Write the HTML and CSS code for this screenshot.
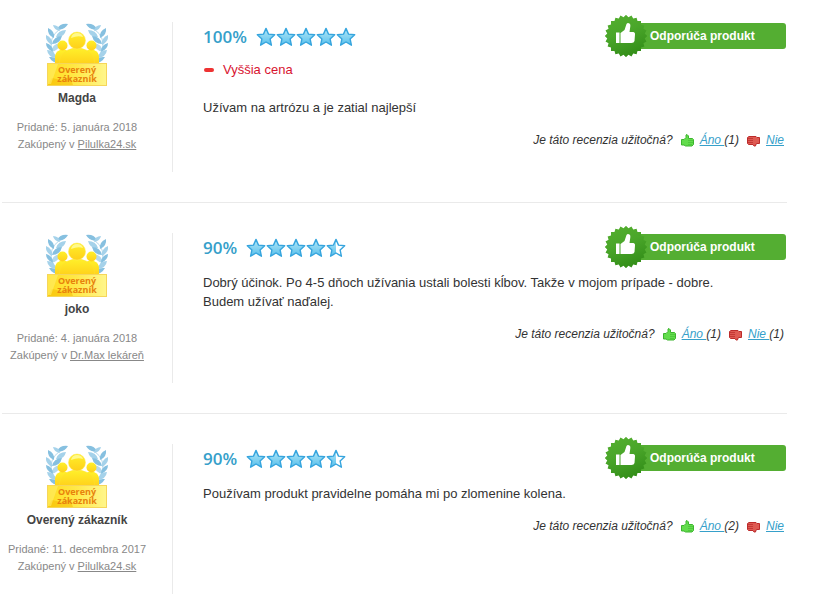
FILE: index.html
```html
<!DOCTYPE html>
<html lang="sk">
  <head>
    <meta charset="UTF-8" />
    <meta name="viewport" content="width=device-width, initial-scale=1.0" />
    <title>Recenzie produktu</title>
    <link rel="stylesheet" href="styles.css">
  </head>
  <body>
    <!-- Shared icons -->
    <svg class="sprite" aria-hidden="true">
      <defs>
        <linearGradient id="star-fill" x1="0" y1="0" x2="0" y2="1">
          <stop offset="0" stop-color="#b4e8f8" />
          <stop offset="1" stop-color="#58bfeb" />
        </linearGradient>
        <linearGradient id="gold" x1="0" y1="0" x2="0" y2="1">
          <stop offset="0" stop-color="#fff02a" />
          <stop offset="1" stop-color="#ffcf1a" />
        </linearGradient>
        <linearGradient id="plate" x1="0" y1="0" x2="1" y2="0">
          <stop offset="0" stop-color="#ffdc1e" />
          <stop offset="0.5" stop-color="#ffe94a" />
          <stop offset="1" stop-color="#fff68c" />
        </linearGradient>
        <linearGradient id="seal-fill" x1="0" y1="0" x2="0.4" y2="1">
          <stop offset="0" stop-color="#55b030" />
          <stop offset="0.5" stop-color="#4aa62a" />
          <stop offset="1" stop-color="#35901a" />
        </linearGradient>
        <clipPath id="seal-shape">
          <rect x="6" y="6" width="30" height="30" />
          <rect x="6" y="6" width="30" height="30" transform="rotate(15 21 21)" />
          <rect x="6" y="6" width="30" height="30" transform="rotate(30 21 21)" />
          <rect x="6" y="6" width="30" height="30" transform="rotate(45 21 21)" />
          <rect x="6" y="6" width="30" height="30" transform="rotate(60 21 21)" />
          <rect x="6" y="6" width="30" height="30" transform="rotate(75 21 21)" />
        </clipPath>
      </defs>

      <symbol id="star" viewBox="0 0 20 20">
        <path d="M10 1.4l2.5 5.7 6.2.6-4.6 4.2 1.3 6.3L10 15l-5.4 3.2 1.3-6.3L1.3 7.7l6.2-.6z" fill="url(#star-fill)" stroke="#36a5de" stroke-width="1.4" stroke-linejoin="round" />
      </symbol>

      <symbol id="star-half" viewBox="0 0 20 20">
        <path d="M10 2v13l-5 2.8 1.2-6L2 8l5.7-.5z" fill="url(#star-fill)" />
        <path d="M10 1.4l2.5 5.7 6.2.6-4.6 4.2 1.3 6.3L10 15l-5.4 3.2 1.3-6.3L1.3 7.7l6.2-.6z" fill="none" stroke="#36a5de" stroke-width="1.4" stroke-linejoin="round" />
      </symbol>

      <symbol id="wreath" viewBox="0 0 24 42">
        <path d="M20 3Q5 9 5 22q1 10 9 17" fill="none" stroke="#b5d9ec" />
        <g fill="#86c0e0">
          <path d="M22 1q-8-1-11 5 7 2 11-5z" />
          <path d="M14 8q-6-1-7-6 6 0 7 6z" fill="#a5d2ea" />
          <path d="M20 7q-8 0-10 7 8 1 10-7z" fill="#a5d2ea" />
          <path d="M8 15Q1 12 2 5q7 3 6 10z" />
          <path d="M16 13q-8 0-10 8 8 0 10-8z" />
          <path d="M6 22Q-1 18 0 12q7 3 6 10z" fill="#a5d2ea" />
          <path d="M14 20q-8 1-9 9 8-1 9-9z" fill="#b5d9ec" />
          <path d="M7 29q-7-3-7-9 7 2 7 9z" />
          <path d="M10 35q-8-1-9-8 8 0 9 8z" fill="#a5d2ea" />
          <path d="M14 40Q7 41 3 34q8-1 11 6z" />
        </g>
      </symbol>

      <symbol id="verified" viewBox="0 0 62 64">
        <use href="#wreath" width="24" height="42" />
        <use href="#wreath" width="24" height="42" transform="translate(62 0) scale(-1 1)" />
        <g fill="url(#gold)">
          <path d="M9 42v-8q0-5 5-7h6q4 2 4 6v9z" />
          <path d="M38 42v-9q0-4 4-6h6q5 2 5 7v8z" />
          <circle cx="16.5" cy="22.5" r="5" />
          <circle cx="45.5" cy="22.5" r="5" />
        </g>
        <path d="M13 42q0-14 15-17h6q15 3 15 17z" fill="url(#gold)" stroke="#ffdf30" stroke-width="0.5" />
        <circle cx="31" cy="17.5" r="8.5" fill="url(#gold)" stroke="#ffe75a" stroke-width="0.5" />
        <path d="M25 15q1-5 6-5 5 0 6 4-5-2-12 1z" fill="#fff98c" />
        <rect x="1.5" y="40.5" width="59" height="22" fill="url(#plate)" stroke="#f6d65a" />
        <path d="M2 62l4-7 9 2 9-3 3 8z" fill="#f5b800" opacity="0.5" />
        <path d="M2 41h10L5 61H2z" fill="#fff17a" opacity="0.5" />
      </symbol>

      <symbol id="seal" viewBox="0 0 42 42">
        <rect width="42" height="42" fill="url(#seal-fill)" clip-path="url(#seal-shape)" />
        <path d="M11 17.5h3.5V28H11zM15.500 18l4-3 2-6q1-1.500 3-.5 1.300 1 .8 3L24.500 17h4q2 .5 1.500 2.500l-.5 6.500q-.5 2-3 2h-11z" fill="#fff" />
      </symbol>

      <symbol id="thumb-up" viewBox="0 0 13 13">
        <path d="M.5 5.500H3l2-2V1l1-.5L7.500 2v2.500h4l1 1v5L11 12H4.500L3 11H.5z" fill="#62dc4c" stroke="#3db52f" />
        <path d="M7 6.500h5M7 8.500h5M7 10.500h4" stroke="#3db52f" opacity="0.500" />
      </symbol>

      <symbol id="thumb-down" viewBox="0 0 13 13">
        <path d="M12.500 3.500H10l-1-1H2l-1.500 1v6l1 1H6l1 1.500h1.500l.5-2 1-.5h2.500z" fill="#de5a52" stroke="#bc2b2b" />
        <path d="M1 4.500h5M1 6.500h5M1 8.500h5" stroke="#b52222" opacity="0.600" />
      </symbol>
    </svg>

    <main class="reviews">
      <article class="review">
        <div class="author">
          <div class="verified">
            <svg aria-hidden="true"><use href="#verified" /></svg>
            <span>Overený<br>zákazník</span>
          </div>
          <strong class="name">Magda</strong>
          <p class="meta">Pridané: 5. januára 2018<br>Zakúpený v <a href="#">Pilulka24.sk</a></p>
        </div>
        <div class="content">
          <div class="top">
            <span class="percent">100%</span>
            <span class="stars">
              <svg><use href="#star" /></svg>
              <svg><use href="#star" /></svg>
              <svg><use href="#star" /></svg>
              <svg><use href="#star" /></svg>
              <svg><use href="#star" /></svg>
            </span>
            <div class="recommend"><svg class="seal"><use href="#seal" /></svg>Odporúča produkt</div>
          </div>
          <ul class="cons">
            <li>Vyššia cena</li>
          </ul>
          <p class="text">Užívam na artrózu a je zatial najlepší</p>
          <div class="useful">
            <span class="question">Je táto recenzia užitočná?</span>
            <svg><use href="#thumb-up" /></svg>
            <span class="vote"><a href="#">Áno </a>(1)</span>
            <svg><use href="#thumb-down" /></svg>
            <span class="vote"><a href="#">Nie</a></span>
          </div>
        </div>
      </article>

      <article class="review">
        <div class="author">
          <div class="verified">
            <svg aria-hidden="true"><use href="#verified" /></svg>
            <span>Overený<br>zákazník</span>
          </div>
          <strong class="name">joko</strong>
          <p class="meta">Pridané: 4. januára 2018<br>Zakúpený v <a href="#">Dr.Max lekáreň</a></p>
        </div>
        <div class="content">
          <div class="top">
            <span class="percent">90%</span>
            <span class="stars">
              <svg><use href="#star" /></svg>
              <svg><use href="#star" /></svg>
              <svg><use href="#star" /></svg>
              <svg><use href="#star" /></svg>
              <svg><use href="#star-half" /></svg>
            </span>
            <div class="recommend"><svg class="seal"><use href="#seal" /></svg>Odporúča produkt</div>
          </div>
          <p class="text">Dobrý účinok. Po 4-5 dňoch užívania ustali bolesti kĺbov. Takže v mojom prípade - dobre.<br>Budem užívať naďalej.</p>
          <div class="useful">
            <span class="question">Je táto recenzia užitočná?</span>
            <svg><use href="#thumb-up" /></svg>
            <span class="vote"><a href="#">Áno </a>(1)</span>
            <svg><use href="#thumb-down" /></svg>
            <span class="vote"><a href="#">Nie </a>(1)</span>
          </div>
        </div>
      </article>

      <article class="review">
        <div class="author">
          <div class="verified">
            <svg aria-hidden="true"><use href="#verified" /></svg>
            <span>Overený<br>zákazník</span>
          </div>
          <strong class="name">Overený zákazník</strong>
          <p class="meta">Pridané: 11. decembra 2017<br>Zakúpený v <a href="#">Pilulka24.sk</a></p>
        </div>
        <div class="content">
          <div class="top">
            <span class="percent">90%</span>
            <span class="stars">
              <svg><use href="#star" /></svg>
              <svg><use href="#star" /></svg>
              <svg><use href="#star" /></svg>
              <svg><use href="#star" /></svg>
              <svg><use href="#star-half" /></svg>
            </span>
            <div class="recommend"><svg class="seal"><use href="#seal" /></svg>Odporúča produkt</div>
          </div>
          <p class="text">Používam produkt pravidelne pomáha mi po zlomenine kolena.</p>
          <div class="useful">
            <span class="question">Je táto recenzia užitočná?</span>
            <svg><use href="#thumb-up" /></svg>
            <span class="vote"><a href="#">Áno </a>(2)</span>
            <svg><use href="#thumb-down" /></svg>
            <span class="vote"><a href="#">Nie</a></span>
          </div>
        </div>
      </article>
    </main>
  </body>
</html>
```
FILE: styles.css
```css
body {
  margin: 0;
  background: #fff;
  color: #333;
  font-family: "Liberation Sans", Arial, sans-serif;
  font-size: 13px;
  line-height: 19px;
}

p,
ul {
  margin: 0;
  padding: 0;
}

.sprite {
  position: absolute;
  width: 0;
  height: 0;
}

.reviews {
  margin: 0 27px 0 2px;
}

.review {
  display: flex;
  padding: 30px 0;
  border-bottom: 1px solid #eaeaea;
}

.review:first-child {
  padding-top: 22px;
}

.review:last-child {
  padding-bottom: 0;
  border-bottom: none;
}

/* Left column */
.author {
  flex: 0 0 150px;
  min-height: 150px;
  padding-right: 20px;
  border-right: 1px solid #eaeaea;
  text-align: center;
}

.verified {
  position: relative;
  width: 62px;
  margin: 1px auto 0;
}

.verified svg {
  display: block;
  width: 62px;
  height: 64px;
}

/* label on the golden plate */
.verified span {
  position: absolute;
  right: 0;
  bottom: 4px;
  left: 0;
  color: #e8820c;
  font-family: "Open Sans", sans-serif;
  font-size: 9px;
  font-weight: 700;
  line-height: 9px;
}

.name {
  display: block;
  margin-top: 2px;
  font-size: 12px;
  color: #444;
}

.meta {
  margin-top: 11px;
  font-size: 11px;
  line-height: 17px;
  color: #888;
}

.meta a {
  color: #888;
}

/* Right column */
.content {
  flex: 1;
  padding-left: 30px;
}

.top {
  display: flex;
  align-items: center;
  height: 28px;
  margin-bottom: 12px;
}

.percent {
  font-family: "Open Sans", sans-serif;
  font-size: 17px;
  font-weight: 600;
  color: #36a0ca;
}

.stars {
  display: flex;
  margin: 2px 0 0 9px;
}

.stars svg {
  width: 20px;
  height: 20px;
}

.recommend {
  position: relative;
  box-sizing: border-box;
  width: 167px;
  height: 26px;
  margin: 0 1px 0 auto;
  padding-left: 31px;
  border-radius: 3px;
  background: #54ae32;
  color: #fff;
  font-size: 12px;
  font-weight: bold;
  line-height: 26px;
}

.seal {
  position: absolute;
  top: -8px;
  left: -14px;
  width: 42px;
  height: 42px;
}

.cons {
  margin: -2px 0 19px;
  list-style: none;
  color: #d8132f;
}

.cons li {
  display: flex;
  align-items: center;
  gap: 9px;
}

.cons li::before {
  content: "";
  width: 10px;
  height: 4px;
  margin-left: 1px;
  border-radius: 2px;
  background: #e33;
}

.useful {
  display: flex;
  align-items: center;
  justify-content: flex-end;
  margin: 14px 3px 0 0;
  font-size: 12px;
  font-style: italic;
}

.useful svg {
  width: 13px;
  height: 13px;
  margin: 0 6px 0 8px;
}

.useful a {
  color: #36a0ca;
}

.vote {
  white-space: pre;
}
```
